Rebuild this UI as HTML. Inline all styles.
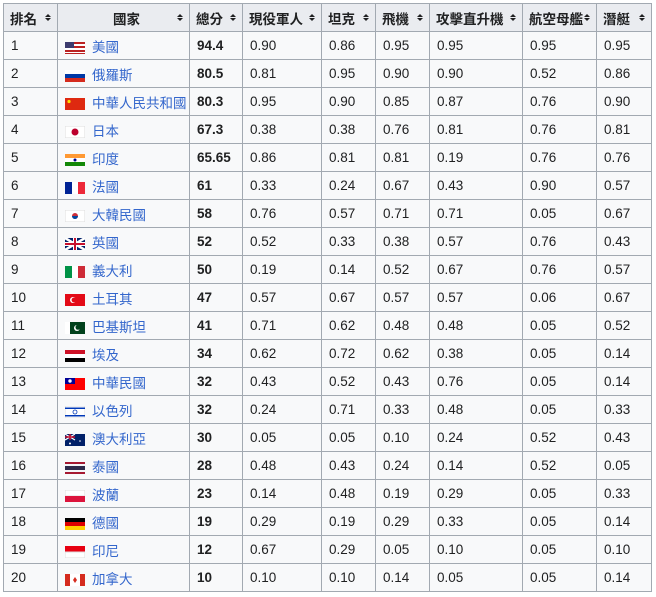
<!DOCTYPE html>
<html><head><meta charset="utf-8"><style>
body{margin:0;background:#fff;font-family:"Liberation Sans","Noto Sans CJK TC",sans-serif;font-size:13.5px;color:#202122}
table{position:absolute;left:3px;top:3px;border-collapse:collapse;table-layout:fixed;background:#f8f9fa;border:1px solid #a2a9b1}
td,th{border:1px solid #a2a9b1;height:27px;padding:0 0 0 7px;text-align:left;white-space:nowrap;overflow:hidden}
th{background:#eaecf0;font-weight:bold;position:relative;padding-left:6px}
th:after{content:"";position:absolute;right:6px;top:10px;width:0;height:0;border-left:3px solid transparent;border-right:3px solid transparent;border-bottom:3px solid #202122}
th:before{content:"";position:absolute;right:6px;top:14px;width:0;height:0;border-left:3px solid transparent;border-right:3px solid transparent;border-top:3px solid #202122}
th.c{text-align:center}
a{color:#3366cc;text-decoration:none}
svg{vertical-align:-2px;margin-right:7px}
b{font-weight:bold}
</style></head><body>
<table>
<colgroup><col style="width:54px"><col style="width:132px"><col style="width:53px"><col style="width:79px"><col style="width:54px"><col style="width:54px"><col style="width:93px"><col style="width:74px"><col style="width:55px"></colgroup>
<tr><th>排名</th><th class="c">國家</th><th>總分</th><th>現役軍人</th><th>坦克</th><th>飛機</th><th>攻擊直升機</th><th>航空母艦</th><th>潛艇</th></tr>
<tr><td>1</td><td><svg width="20" height="12"><rect width="20" height="12" fill="#b22"/><rect y="2" width="20" height="2" fill="#fff"/><rect y="6" width="20" height="2" fill="#fff"/><rect y="10" width="20" height="1" fill="#fff"/><rect width="9" height="6" fill="#3c3b6e"/></svg><a>美國</a></td><td><b>94.4</b></td><td>0.90</td><td>0.86</td><td>0.95</td><td>0.95</td><td>0.95</td><td>0.95</td></tr>
<tr><td>2</td><td><svg width="20" height="12"><rect width="20" height="4" fill="#fff"/><rect y="4" width="20" height="4" fill="#0039a6"/><rect y="8" width="20" height="4" fill="#d52b1e"/></svg><a>俄羅斯</a></td><td><b>80.5</b></td><td>0.81</td><td>0.95</td><td>0.90</td><td>0.90</td><td>0.52</td><td>0.86</td></tr>
<tr><td>3</td><td><svg width="20" height="12"><rect width="20" height="12" fill="#de2910"/><circle cx="4" cy="3.5" r="1.6" fill="#ffde00"/></svg><a>中華人民共和國</a></td><td><b>80.3</b></td><td>0.95</td><td>0.90</td><td>0.85</td><td>0.87</td><td>0.76</td><td>0.90</td></tr>
<tr><td>4</td><td><svg width="20" height="12"><rect width="20" height="12" fill="#fff" stroke="#ddd"/><circle cx="10" cy="6" r="3.5" fill="#bc002d"/></svg><a>日本</a></td><td><b>67.3</b></td><td>0.38</td><td>0.38</td><td>0.76</td><td>0.81</td><td>0.76</td><td>0.81</td></tr>
<tr><td>5</td><td><svg width="20" height="12"><rect width="20" height="4" fill="#f93"/><rect y="4" width="20" height="4" fill="#fff"/><rect y="8" width="20" height="4" fill="#138808"/><circle cx="10" cy="6" r="1.5" fill="#008"/></svg><a>印度</a></td><td><b>65.65</b></td><td>0.86</td><td>0.81</td><td>0.81</td><td>0.19</td><td>0.76</td><td>0.76</td></tr>
<tr><td>6</td><td><svg width="20" height="12"><rect width="7" height="12" fill="#002395"/><rect x="7" width="6" height="12" fill="#fff"/><rect x="13" width="7" height="12" fill="#ed2939"/></svg><a>法國</a></td><td><b>61</b></td><td>0.33</td><td>0.24</td><td>0.67</td><td>0.43</td><td>0.90</td><td>0.57</td></tr>
<tr><td>7</td><td><svg width="20" height="12"><rect width="20" height="12" fill="#fff" stroke="#ddd"/><circle cx="10" cy="6" r="3" fill="#cd2e3a"/><path d="M7 6a3 3 0 0 0 6 0z" fill="#0047a0"/></svg><a>大韓民國</a></td><td><b>58</b></td><td>0.76</td><td>0.57</td><td>0.71</td><td>0.71</td><td>0.05</td><td>0.67</td></tr>
<tr><td>8</td><td><svg width="20" height="12"><rect width="20" height="12" fill="#012169"/><path d="M0 0L20 12M20 0L0 12" stroke="#fff" stroke-width="2.5"/><path d="M10 0v12M0 6h20" stroke="#fff" stroke-width="4"/><path d="M10 0v12M0 6h20" stroke="#c8102e" stroke-width="2"/></svg><a>英國</a></td><td><b>52</b></td><td>0.52</td><td>0.33</td><td>0.38</td><td>0.57</td><td>0.76</td><td>0.43</td></tr>
<tr><td>9</td><td><svg width="20" height="12"><rect width="7" height="12" fill="#009246"/><rect x="7" width="6" height="12" fill="#fff"/><rect x="13" width="7" height="12" fill="#ce2b37"/></svg><a>義大利</a></td><td><b>50</b></td><td>0.19</td><td>0.14</td><td>0.52</td><td>0.67</td><td>0.76</td><td>0.57</td></tr>
<tr><td>10</td><td><svg width="20" height="12"><rect width="20" height="12" fill="#e30a17"/><circle cx="8" cy="6" r="3" fill="#fff"/><circle cx="9" cy="6" r="2.4" fill="#e30a17"/></svg><a>土耳其</a></td><td><b>47</b></td><td>0.57</td><td>0.67</td><td>0.57</td><td>0.57</td><td>0.06</td><td>0.67</td></tr>
<tr><td>11</td><td><svg width="20" height="12"><rect width="20" height="12" fill="#01411c"/><rect width="5" height="12" fill="#fff"/><circle cx="12" cy="6" r="3" fill="#fff"/><circle cx="13" cy="5.3" r="2.5" fill="#01411c"/></svg><a>巴基斯坦</a></td><td><b>41</b></td><td>0.71</td><td>0.62</td><td>0.48</td><td>0.48</td><td>0.05</td><td>0.52</td></tr>
<tr><td>12</td><td><svg width="20" height="12"><rect width="20" height="4" fill="#ce1126"/><rect y="4" width="20" height="4" fill="#fff"/><rect y="8" width="20" height="4" fill="#000"/></svg><a>埃及</a></td><td><b>34</b></td><td>0.62</td><td>0.72</td><td>0.62</td><td>0.38</td><td>0.05</td><td>0.14</td></tr>
<tr><td>13</td><td><svg width="20" height="12"><rect width="20" height="12" fill="#fe0000"/><rect width="10" height="6" fill="#000095"/><circle cx="5" cy="3" r="1.7" fill="#fff"/></svg><a>中華民國</a></td><td><b>32</b></td><td>0.43</td><td>0.52</td><td>0.43</td><td>0.76</td><td>0.05</td><td>0.14</td></tr>
<tr><td>14</td><td><svg width="20" height="12"><rect width="20" height="12" fill="#fff" stroke="#ddd"/><rect y="1.5" width="20" height="1.5" fill="#0038b8"/><rect y="9" width="20" height="1.5" fill="#0038b8"/><circle cx="10" cy="6" r="2" fill="none" stroke="#0038b8" stroke-width=".8"/></svg><a>以色列</a></td><td><b>32</b></td><td>0.24</td><td>0.71</td><td>0.33</td><td>0.48</td><td>0.05</td><td>0.33</td></tr>
<tr><td>15</td><td><svg width="20" height="12"><rect width="20" height="12" fill="#012169"/><path d="M0 0L10 6M10 0L0 6" stroke="#fff" stroke-width="1.2"/><path d="M5 0v6M0 3h10" stroke="#c8102e" stroke-width="1.5"/><circle cx="15" cy="7" r=".8" fill="#fff"/><circle cx="5" cy="9.5" r="1" fill="#fff"/></svg><a>澳大利亞</a></td><td><b>30</b></td><td>0.05</td><td>0.05</td><td>0.10</td><td>0.24</td><td>0.52</td><td>0.43</td></tr>
<tr><td>16</td><td><svg width="20" height="12"><rect width="20" height="12" fill="#a51931"/><rect y="2" width="20" height="8" fill="#f4f5f8"/><rect y="4" width="20" height="4" fill="#2d2a4a"/></svg><a>泰國</a></td><td><b>28</b></td><td>0.48</td><td>0.43</td><td>0.24</td><td>0.14</td><td>0.52</td><td>0.05</td></tr>
<tr><td>17</td><td><svg width="20" height="12"><rect width="20" height="6" fill="#fff" stroke="#ddd"/><rect y="6" width="20" height="6" fill="#dc143c"/></svg><a>波蘭</a></td><td><b>23</b></td><td>0.14</td><td>0.48</td><td>0.19</td><td>0.29</td><td>0.05</td><td>0.33</td></tr>
<tr><td>18</td><td><svg width="20" height="12"><rect width="20" height="4" fill="#000"/><rect y="4" width="20" height="4" fill="#d00"/><rect y="8" width="20" height="4" fill="#ffce00"/></svg><a>德國</a></td><td><b>19</b></td><td>0.29</td><td>0.19</td><td>0.29</td><td>0.33</td><td>0.05</td><td>0.14</td></tr>
<tr><td>19</td><td><svg width="20" height="12"><rect width="20" height="6" fill="#e70011"/><rect y="6" width="20" height="6" fill="#fff" stroke="#ddd"/></svg><a>印尼</a></td><td><b>12</b></td><td>0.67</td><td>0.29</td><td>0.05</td><td>0.10</td><td>0.05</td><td>0.10</td></tr>
<tr><td>20</td><td><svg width="20" height="12"><rect width="20" height="12" fill="#fff"/><rect width="5" height="12" fill="#d52b1e"/><rect x="15" width="5" height="12" fill="#d52b1e"/><path d="M10 3l2 3-2 3-2-3z" fill="#d52b1e"/></svg><a>加拿大</a></td><td><b>10</b></td><td>0.10</td><td>0.10</td><td>0.14</td><td>0.05</td><td>0.05</td><td>0.14</td></tr>
</table>
</body></html>
